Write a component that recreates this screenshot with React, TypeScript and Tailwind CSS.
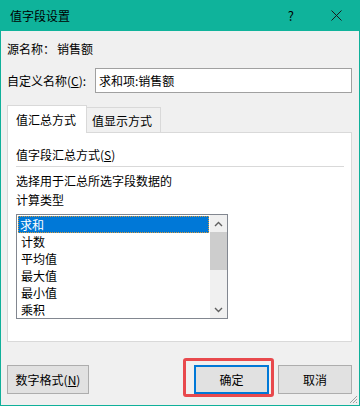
import React from 'react'

const font = { fontFamily: '"Microsoft YaHei", "Noto Sans CJK SC", "Noto Sans", sans-serif' }

const items = ['求和', '计数', '平均值', '最大值', '最小值', '乘积']

function Chevron({ up }: { up?: boolean }) {
  return (
    <svg width="9" height="6" viewBox="0 0 9 6">
      <path
        d={up ? 'M1 5 L4.5 1.5 L8 5' : 'M1 1 L4.5 4.5 L8 1'}
        fill="none"
        stroke="#606060"
        strokeWidth={1.4}
      />
    </svg>
  )
}

export default function App() {
  return (
    <div className="w-[360px] h-[406px] flex flex-col bg-[#f0f0f0] text-[12px] leading-[16px] text-black" style={font}>
      {/* Title bar */}
      <div className="h-[31px] shrink-0 bg-[#0fb39b] flex items-center pl-[10px]">
        <span className="text-[12px] text-black">值字段设置</span>
        <span className="ml-auto mr-[37px] text-[13px] text-black">?</span>
        <svg width="11" height="11" viewBox="0 0 11 11" className="mr-[18px]">
          <path d="M0.5 0.5 L10.5 10.5 M10.5 0.5 L0.5 10.5" stroke="#1a1a1a" strokeWidth={1} />
        </svg>
      </div>

      {/* Body */}
      <div className="relative flex-1 flex flex-col border-x border-b border-[#10b09a] pl-[6px] pr-[7px]">
        <div className="mt-[10px] flex h-[16px] items-center">
          <span>源名称：</span>
          <span className="ml-[2px]">销售额</span>
        </div>

        <div className="mt-[11px] flex h-[25px] items-center">
          <span className="w-[88px]">
            自定义名称(<span className="underline">C</span>):
          </span>
          <div className="ml-auto w-[257px] h-[25px] bg-white border border-[#a0a0a0] flex items-center pl-[3px]">
            求和项:销售额
          </div>
        </div>

        {/* Tabs */}
        <div className="mt-[12px] flex items-end h-[27px]">
          <div className="relative z-10 -mb-px h-[28px] w-[80px] bg-white border-l border-t border-r border-[#d9d9d9] pl-[8px] pt-[6px]">
            值汇总方式
          </div>
          <div className="h-[25px] w-[74px] border-t border-r border-[#d9d9d9] bg-[#f0f0f0] pl-[5px] pt-[5px]">
            值显示方式
          </div>
        </div>

        <div className="h-[210px] w-[345px] bg-white border border-[#d9d9d9] pl-[8px] pr-[7px]">
          <div className="mt-[14px] h-[16px]">
            值字段汇总方式(<span className="underline">S</span>)
          </div>
          <div className="mt-[3px] h-px w-[328px] bg-[#d9d9d9]" />
          <div className="mt-[6px] h-[16px]">选择用于汇总所选字段数据的</div>
          <div className="mt-[3px] h-[16px]">计算类型</div>

          {/* List box */}
          <div className="mt-[6px] w-[212px] h-[105px] border border-[#828790] flex bg-white">
            <div className="flex-1 pt-[1px] pl-px">
              {items.map((it, i) => (
                <div
                  key={it}
                  className={
                    i === 0
                      ? 'h-[17px] w-[191px] bg-[#0078d7] text-white pl-[2px] flex items-center outline-1 outline-dotted outline-[#d89a3c] -outline-offset-1'
                      : 'h-[17px] pl-[3px] flex items-center'
                  }
                >
                  {it}
                </div>
              ))}
            </div>
            <div className="w-[17px] bg-[#f0f0f0] flex flex-col items-center">
              <div className="h-[17px] flex items-center justify-center">
                <Chevron up />
              </div>
              <div className="w-[17px] h-[38px] bg-[#cdcdcd]" />
              <div className="mt-auto h-[17px] flex items-center justify-center">
                <Chevron />
              </div>
            </div>
          </div>
        </div>

        {/* Buttons */}
        <div className="mt-[23px] flex h-[29px]">
          <button className="w-[82px] h-[29px] bg-[#e1e1e1] border border-[#adadad] text-[12px]" style={font}>
            数字格式(<span className="underline">N</span>)
          </button>
          <div className="relative ml-[105px]">
            <button className="w-[75px] h-[29px] bg-[#e1e1e1] border-2 border-[#0078d7] text-[12px]" style={font}>
              确定
            </button>
            <span className="absolute -left-[11px] -top-[7px] w-[91px] h-[39px] border-[3px] border-[#e8494d] rounded-[3px] pointer-events-none" />
          </div>
          <button className="ml-[9px] w-[74px] h-[29px] bg-[#e1e1e1] border border-[#adadad] text-[12px]" style={font}>
            取消
          </button>
        </div>

        {/* Resize grip */}
        <svg width="10" height="10" viewBox="0 0 10 10" className="absolute right-[1px] bottom-[1px]">
          <path d="M9 2 L2 9 M9 5 L5 9 M9 8 L8 9" stroke="#a0a0a0" strokeWidth={1} />
        </svg>
      </div>
    </div>
  )
}
